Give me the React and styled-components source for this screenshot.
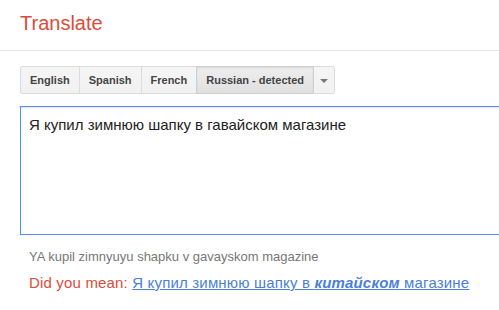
import styled, { createGlobalStyle } from "styled-components";

const Global = createGlobalStyle`
  html, body {
    margin: 0;
    padding: 0;
    background: #fff;
    overflow: hidden;
    font-family: "Liberation Sans", Arial, sans-serif;
  }
`;

const Header = styled.div`
  height: 51px;
  border-bottom: 1px solid #e5e5e5;
  padding-left: 20px;
  box-sizing: border-box;
  display: flex;
  align-items: center;
`;

const Title = styled.h1`
  margin: 0;
  font-size: 20px;
  font-weight: normal;
  color: #dd4b39;
  line-height: 24px;
  position: relative;
  top: -2px;
`;

const Main = styled.div`
  padding: 15px 0 0 20px;
`;

const Group = styled.div`
  display: flex;
  height: 28px;
`;

const LangButton = styled.div`
  box-sizing: border-box;
  height: 28px;
  padding: 0 ${(p) => (p.$narrow ? "0" : "9px")};
  width: ${(p) => (p.$narrow ? "22px" : "auto")};
  display: flex;
  align-items: center;
  justify-content: center;
  font-size: 11px;
  font-weight: bold;
  color: #444;
  border: 1px solid #dcdcdc;
  margin-left: -1px;
  &:first-child {
    margin-left: 0;
    border-radius: 2px 0 0 2px;
  }
  &:last-child {
    border-radius: 0 2px 2px 0;
  }
  background: ${(p) =>
    p.$active
      ? "linear-gradient(#eeeeee, #e0e0e0)"
      : "linear-gradient(#f5f5f5, #f1f1f1)"};
  box-shadow: ${(p) => (p.$active ? "inset 0 1px 2px rgba(0,0,0,0.1)" : "none")};
  position: relative;
  z-index: ${(p) => (p.$active ? 1 : 0)};
  ${(p) => p.$active && "border-color: #cfcfcf;"}
`;

const Arrow = styled.span`
  width: 0;
  height: 0;
  border-left: 4px solid transparent;
  border-right: 4px solid transparent;
  border-top: 4px solid #777;
  margin-top: 1px;
`;

const Source = styled.div`
  margin-top: 12px;
  height: 129px;
  box-sizing: border-box;
  border: 1px solid #4d90fe;
  border-right: none;
  box-shadow: inset 0 1px 2px rgba(0, 0, 0, 0.1);
  padding: 8px 8px;
  font-size: 15px;
  line-height: 20px;
  color: #222;
`;

const Translit = styled.div`
  margin-top: 14px;
  padding-left: 9px;
  font-size: 13px;
  color: #777;
  line-height: 16px;
`;

const Suggest = styled.div`
  margin-top: 9px;
  padding-left: 9px;
  font-size: 15px;
  line-height: 18px;
  letter-spacing: 0.17px;
  color: #dd4b39;
`;

const SuggestLink = styled.a`
  color: #4a80d8;
  text-decoration: underline;
  b {
    font-style: italic;
    font-weight: bold;
  }
`;

export default function App() {
  return (
    <>
      <Global />
      <Header>
        <Title>Translate</Title>
      </Header>
      <Main>
        <Group>
          <LangButton>English</LangButton>
          <LangButton>Spanish</LangButton>
          <LangButton>French</LangButton>
          <LangButton $active>Russian - detected</LangButton>
          <LangButton $narrow>
            <Arrow />
          </LangButton>
        </Group>
        <Source>Я купил зимнюю шапку в гавайском магазине</Source>
        <Translit>YA kupil zimnyuyu shapku v gavayskom magazine</Translit>
        <Suggest>
          Did you mean:{" "}
          <SuggestLink href="#">
            Я купил зимнюю шапку в <b>китайском</b> магазине
          </SuggestLink>
        </Suggest>
      </Main>
    </>
  );
}
